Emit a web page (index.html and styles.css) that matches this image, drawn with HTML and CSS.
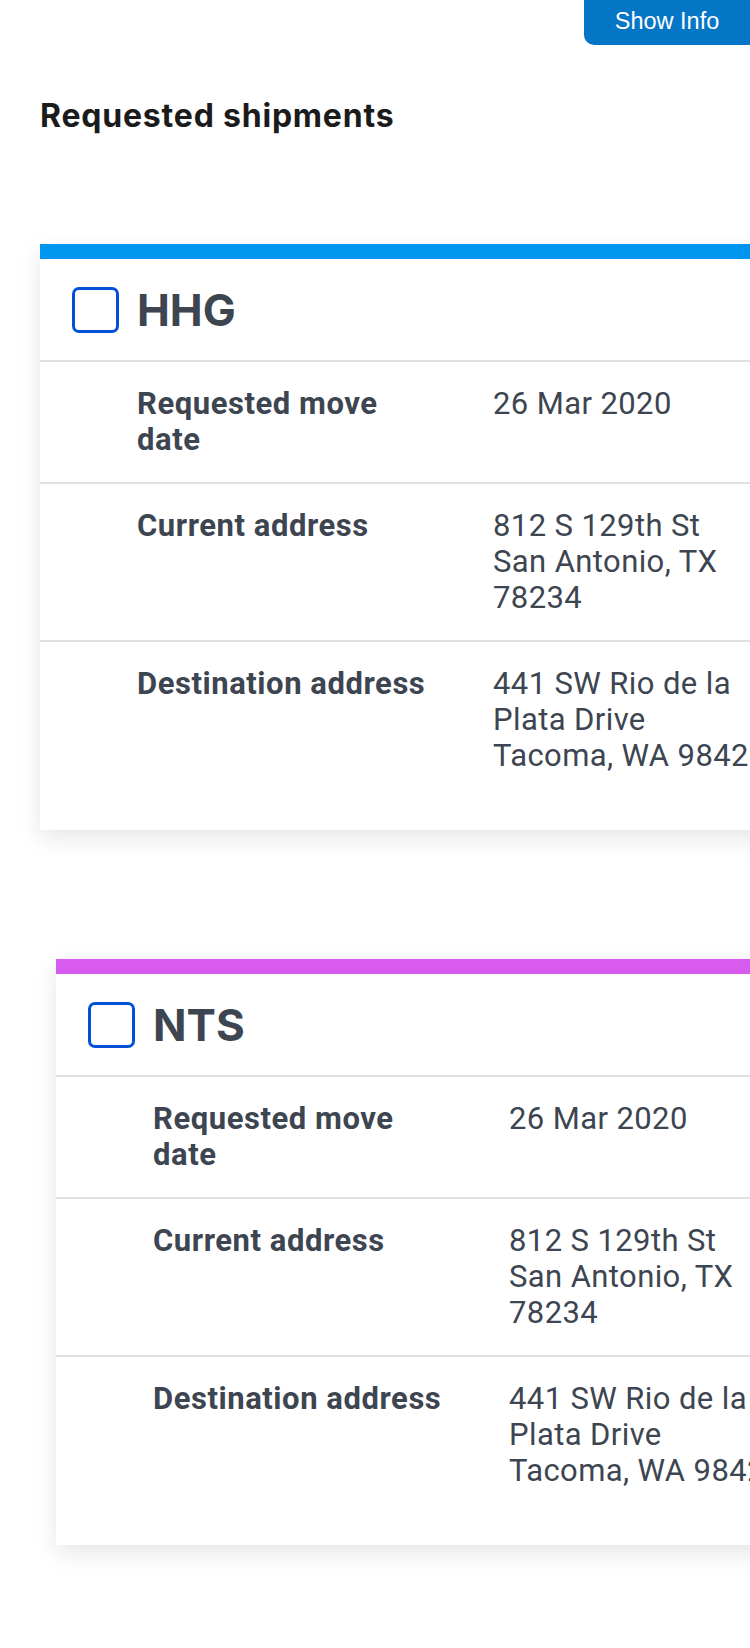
FILE: index.html
```html
<!DOCTYPE html>
<html>
<head>
<meta charset="utf-8">
<link rel="stylesheet" href="styles.css">
</head>
<body>
<div class="page">
  <div class="topbar">
    <button class="show-info">Show Info</button>
  </div>
  <h2 class="title">Requested shipments</h2>

  <section class="card card-hhg">
    <div class="card-header">
      <span class="checkbox"></span>
      <h3 class="card-title">HHG</h3>
    </div>
    <div class="row">
      <div class="label">Requested move date</div>
      <div class="value">26 Mar 2020</div>
    </div>
    <div class="row">
      <div class="label">Current address</div>
      <div class="value">812 S 129th St<br>San Antonio, TX<br>78234</div>
    </div>
    <div class="row">
      <div class="label">Destination address</div>
      <div class="value">441 SW Rio de la<br>Plata Drive<br>Tacoma, WA 98421</div>
    </div>
  </section>

  <section class="card card-nts">
    <div class="card-header">
      <span class="checkbox"></span>
      <h3 class="card-title">NTS</h3>
    </div>
    <div class="row">
      <div class="label">Requested move date</div>
      <div class="value">26 Mar 2020</div>
    </div>
    <div class="row">
      <div class="label">Current address</div>
      <div class="value">812 S 129th St<br>San Antonio, TX<br>78234</div>
    </div>
    <div class="row">
      <div class="label">Destination address</div>
      <div class="value">441 SW Rio de la<br>Plata Drive<br>Tacoma, WA 98421</div>
    </div>
  </section>
</div>
</body>
</html>
```

FILE: styles.css
```css
html, body {
  margin: 0;
  padding: 0;
  background: #ffffff;
  overflow: hidden;
}

.page {
  width: 750px;
  font-family: Roboto, "Liberation Sans", sans-serif;
  color: #3d4551;
  padding-bottom: 80px;
}

.topbar {
  display: flex;
  justify-content: flex-end;
}

.show-info {
  width: 166px;
  height: 45px;
  border: none;
  margin: 0;
  padding: 0 0 2px 0;
  background: #0576c6;
  color: #ffffff;
  font-family: "Liberation Sans", Arial, sans-serif;
  font-size: 23.5px;
  border-radius: 0 0 0 10px;
}

.title {
  margin: 53px 0 0 40px;
  font-family: Inter, Roboto, sans-serif;
  font-size: 32px;
  line-height: 36px;
  letter-spacing: 0.8px;
  font-weight: 700;
  color: #1b1b1b;
}

.card {
  width: 800px;
  margin: 110px 0 0 40px;
  background: #fff;
  border-top: 15px solid #0096f0;
  box-shadow: 0 8px 22px rgba(0, 0, 0, 0.10);
  padding-bottom: 32px;
}

.card-nts {
  margin-top: 129px;
  margin-left: 56px;
  border-top-color: #d85bef;
}

.card-header {
  display: flex;
  align-items: center;
  height: 101px;
  padding-left: 32px;
  border-bottom: 2px solid #dfe1e2;
}

.checkbox {
  box-sizing: border-box;
  width: 47px;
  height: 46px;
  border: 3px solid #0050d8;
  border-radius: 7px;
  margin-right: 18px;
}

.card-title {
  margin: 0;
  font-family: Inter, Roboto, sans-serif;
  font-size: 44px;
  line-height: 52px;
  font-weight: 700;
  color: #3d4551;
}

.row {
  display: flex;
  padding: 24px 0 24px 97px;
  border-bottom: 2px solid #dfe1e2;
  font-size: 31px;
  line-height: 36px;
}

.row:last-child {
  border-bottom: none;
}

.label {
  width: 356px;
  flex: none;
  font-weight: 700;
  letter-spacing: 0.55px;
  padding-right: 60px;
  box-sizing: border-box;
}

.value {
  font-weight: 400;
  letter-spacing: 0.4px;
  white-space: nowrap;
}
```
